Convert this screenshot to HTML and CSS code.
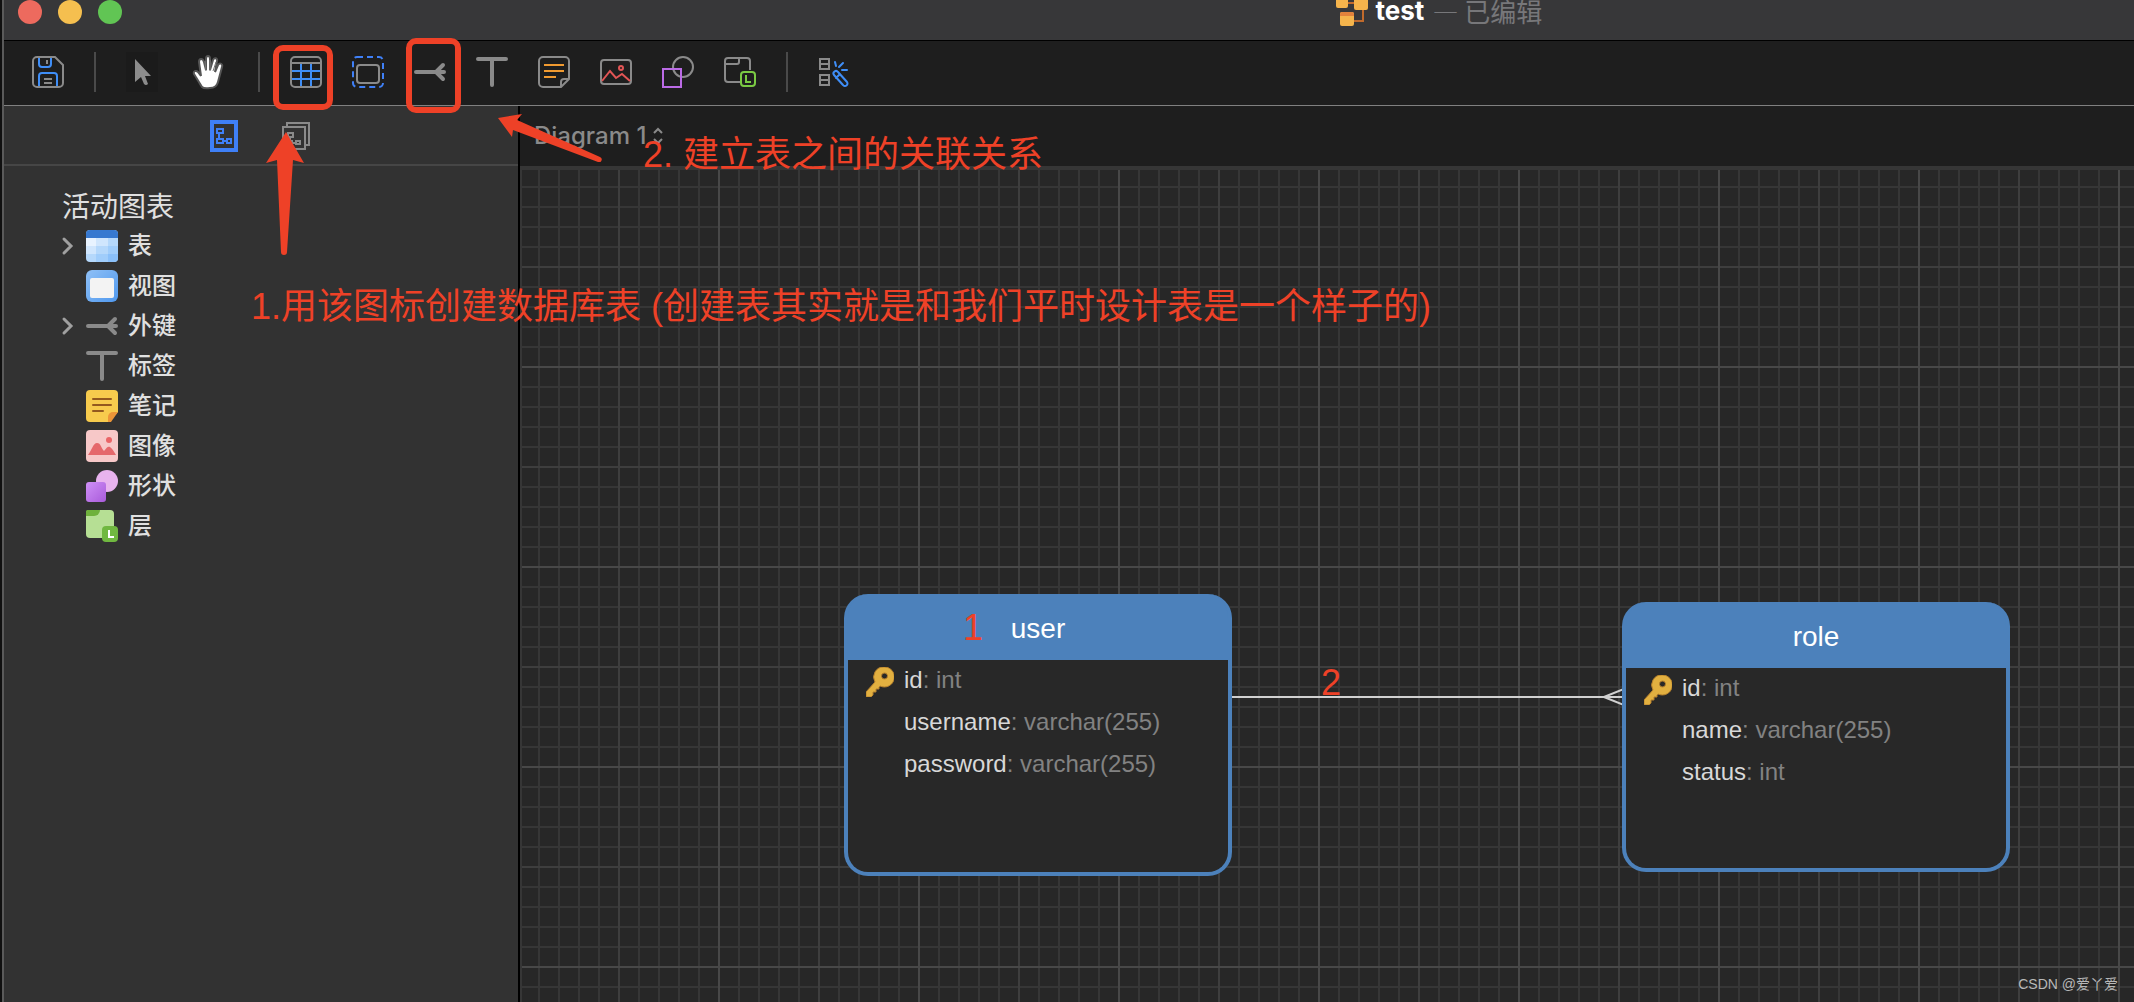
FILE: index.html
```html
<!DOCTYPE html>
<html lang="zh-CN">
<head>
<meta charset="utf-8">
<title>test — 已编辑</title>
<link rel="stylesheet" href="styles.css">
</head>
<body>
<div class="window">
  <header class="titlebar">
    <div class="lights">
      <button class="light light-close" aria-label="关闭"></button>
      <button class="light light-min" aria-label="最小化"></button>
      <button class="light light-max" aria-label="缩放"></button>
    </div>
    <svg class="doc-icon" width="32" height="32" viewBox="0 0 32 32">
      <g fill="none" stroke="#c06a2c" stroke-width="2"><path d="M10 9H20M27 12V27H16"/></g>
      <g fill="#f5b44c"><rect x="0" y="2" width="12" height="12" rx="2"/><rect x="18" y="2" width="14" height="14" rx="2"/><rect x="4" y="18" width="14" height="14" rx="2"/></g>
      <path d="M4 22v-2a2 2 0 0 1 2-2h10a2 2 0 0 1 2 2v2z" fill="#e2823c"/>
    </svg>
    <h1 class="doc-name">test</h1>
    <span class="doc-state">— 已编辑</span>
  </header>

  <nav class="toolbar" aria-label="工具">
    <button class="tool" aria-label="保存">
      <svg width="32" height="32" viewBox="0 0 32 32" fill="none" stroke-width="2"><g stroke="#8a8a8a"><path d="M5 1H23L31 9V27a4 4 0 0 1-4 4H5a4 4 0 0 1-4-4V5a4 4 0 0 1 4-4z"/><path d="M15 4v4M12 23h8M12 27h8"/></g><path d="M7 2V8a3 3 0 0 0 3 3h6a3 3 0 0 0 3-3V2M7 30V20a3 3 0 0 1 3-3H22a3 3 0 0 1 3 3V30" stroke="#3f8ef7"/></svg>
    </button>
    <i class="divider divider-wide"></i>
    <button class="tool tool-pressed" aria-label="选择">
      <svg width="32" height="40" viewBox="0 0 32 40"><path d="M9 7V30l6-5 3 7q2 2 4 0l-3-8h6z" fill="#8c8c8c"/></svg>
    </button>
    <button class="tool tool-hand" aria-label="移动">
      <svg width="32" height="36" viewBox="0 0 32 36"><path d="M10 33C8 30 4 23 2 20 1 17 4 16 6 18L9 22 7 8C7 4 11 4 12 8L14 16V5C14 1 18 1 18 5V16L21 6C22 3 26 4 25 7L23 18 26 11C28 8 31 10 30 13L26 28C25 32 22 34 18 34Q12 35 10 33z" fill="#fff" stroke="#555" stroke-width="2"/><path d="M13 7 14 17M18 6V17M24 8 21 17" stroke="#777" stroke-width="1"/></svg>
    </button>
    <i class="divider divider-mid"></i>
    <button class="tool" aria-label="表">
      <svg width="32" height="32" viewBox="0 0 32 32" fill="none" stroke-width="2"><path d="M11 8V30M21 8V30M2 15H30M2 23H30" stroke="#3f8ef7"/><path d="M2 7H30" stroke="#8a8a8a"/><rect x="1" y="1" width="30" height="30" rx="4" stroke="#8a8a8a"/></svg>
    </button>
    <button class="tool" aria-label="视图">
      <svg width="32" height="32" viewBox="0 0 32 32" fill="none" stroke-width="2"><rect x="1" y="1" width="30" height="30" rx="4" stroke="#3f80f7" stroke-dasharray="6 4"/><rect x="5" y="9" width="22" height="18" rx="3" stroke="#8a8a8a"/></svg>
    </button>
    <button class="tool" aria-label="外键">
      <svg width="32" height="32" viewBox="0 0 32 32" fill="none" stroke="#8a8a8a" stroke-width="4" stroke-linecap="round"><path d="M2 16H30M22 16 29 9M22 16 29 23"/></svg>
    </button>
    <button class="tool" aria-label="标签">
      <svg width="32" height="32" viewBox="0 0 32 32" fill="none" stroke="#8a8a8a" stroke-width="4" stroke-linecap="round"><path d="M2 3H30M16 3V29"/></svg>
    </button>
    <button class="tool" aria-label="笔记">
      <svg width="32" height="32" viewBox="0 0 32 32" fill="none" stroke-width="2"><path d="M31 23V5a4 4 0 0 0-4-4H5a4 4 0 0 0-4 4V27a4 4 0 0 0 4 4H23zM23 31V26a3 3 0 0 1 3-3h5" stroke="#8a8a8a"/><path d="M6 9H26M6 15H26M6 21H18" stroke="#f09a30"/></svg>
    </button>
    <button class="tool" aria-label="图像">
      <svg width="32" height="32" viewBox="0 0 32 32" fill="none" stroke-width="2"><rect x="1" y="4" width="30" height="24" rx="3" stroke="#8a8a8a"/><path d="M2 25 10 15 16 22 22 18 30 25" stroke="#e25555"/><circle cx="21" cy="12" r="2" stroke="#e25555"/></svg>
    </button>
    <button class="tool" aria-label="形状">
      <svg width="32" height="32" viewBox="0 0 32 32" fill="none" stroke-width="2"><circle cx="21" cy="11" r="10" stroke="#8a8a8a"/><rect x="1" y="13" width="18" height="18" stroke="#bb6be6"/></svg>
    </button>
    <button class="tool" aria-label="层">
      <svg width="32" height="32" viewBox="0 0 32 32" fill="none" stroke-width="2"><path d="M26 14V5a3 3 0 0 0-3-3H4a3 3 0 0 0-3 3V23a3 3 0 0 0 3 3H16M15 3V6a2 2 0 0 1-2 2H1" stroke="#8a8a8a"/><rect x="17" y="16" width="14" height="14" rx="3" stroke="#7ac943"/><path d="M22 19V26H27" stroke="#7ac943"/></svg>
    </button>
    <i class="divider divider-end"></i>
    <button class="tool" aria-label="自动布局">
      <svg width="32" height="32" viewBox="0 0 32 32" fill="none" stroke-width="2"><path d="M2 3H11V13H2zM2 8H11M2 19H11V29H2zM2 24H11" stroke="#8a8a8a"/><g stroke="#3f8ef7" stroke-linecap="round"><path d="M17 6 18 10M25 7 21 11M24 14H29"/><path d="M16 19a2 2 0 0 1 4-3L29 26a2 2 0 0 1-4 3zM18 22 22 18"/></g></svg>
    </button>
  </nav>

  <div class="body">
    <aside class="sidebar">
      <div class="sidebar-tabs">
        <button class="tab" aria-label="活动图表">
          <svg width="28" height="32" viewBox="0 0 28 32" fill="none"><rect x="2" y="2" width="24" height="28" stroke="#3f80f7" stroke-width="4"/><path d="M7 9H13V13H7zM9 13V19M7 19H13V23H7zM17 19H21V23H17zM13 21H17" stroke="#3f80f7" stroke-width="2"/></svg>
        </button>
        <button class="tab" aria-label="所有图表">
          <svg width="28" height="28" viewBox="0 0 28 28" fill="none" stroke="#8a8a8a" stroke-width="2"><path d="M5 4V1H27V23H24M1 5H23V27H1zM6 11H11V15H6zM8 15V19M14 19H18V22H14zM6 19H10V22H6zM10 21H14"/></svg>
        </button>
      </div>
      <h2 class="tree-title">活动图表</h2>
      <ul class="tree">
        <li class="tree-row"><svg class="chev" width="10" height="16" viewBox="0 0 10 16"><path d="M1 1 8 8 1 15"/></svg>
          <svg class="tree-icon" width="32" height="32" viewBox="0 0 32 32"><clipPath id="tc"><rect width="32" height="32" rx="4"/></clipPath><g clip-path="url(#tc)"><rect width="32" height="32" fill="#b5d8fb"/><rect width="32" height="8" fill="#3779d0"/><rect y="8" width="10" height="8" fill="#e8f3ff"/><rect x="10" y="8" width="12" height="8" fill="#d0e6fd"/><rect y="16" width="10" height="8" fill="#d0e6fd"/><rect x="22" y="16" width="10" height="8" fill="#a0cdfb"/><rect x="10" y="24" width="12" height="8" fill="#a0cdfb"/><rect x="22" y="24" width="10" height="8" fill="#8ac0fa"/></g></svg><span>表</span></li>
        <li class="tree-row"><i class="chev"></i>
          <svg class="tree-icon" width="32" height="32" viewBox="0 0 32 32"><defs><linearGradient id="vg" x2="1" y2="1"><stop stop-color="#8fc0f6"/><stop offset="1" stop-color="#4f98ee"/></linearGradient></defs><rect width="32" height="32" rx="6" fill="url(#vg)"/><rect x="4" y="8" width="24" height="20" rx="2" fill="#f3f3f3"/></svg><span>视图</span></li>
        <li class="tree-row"><svg class="chev" width="10" height="16" viewBox="0 0 10 16"><path d="M1 1 8 8 1 15"/></svg>
          <svg class="tree-icon" width="32" height="32" viewBox="0 0 32 32" fill="none" stroke="#8a8a8a" stroke-width="4" stroke-linecap="round"><path d="M2 16H30M22 16 29 9M22 16 29 23"/></svg><span>外键</span></li>
        <li class="tree-row"><i class="chev"></i>
          <svg class="tree-icon" width="32" height="32" viewBox="0 0 32 32" fill="none" stroke="#8a8a8a" stroke-width="4" stroke-linecap="round"><path d="M2 3H30M16 3V29"/></svg><span>标签</span></li>
        <li class="tree-row"><i class="chev"></i>
          <svg class="tree-icon" width="32" height="32" viewBox="0 0 32 32"><path d="M4 0H28a4 4 0 0 1 4 4V22L22 32H4a4 4 0 0 1-4-4V4a4 4 0 0 1 4-4z" fill="#f7cb4d"/><path d="M32 22 25 32H22V27a5 5 0 0 1 5-5z" fill="#ec9538"/><path d="M7 9H25M7 15H25M7 21H17" stroke="#93591f" stroke-width="2" stroke-linecap="round"/></svg><span>笔记</span></li>
        <li class="tree-row"><i class="chev"></i>
          <svg class="tree-icon" width="32" height="32" viewBox="0 0 32 32"><rect width="32" height="32" rx="4" fill="#f7c8c8"/><path d="M2 25C6 20 7 13 11 13 15 13 15 18 18 21 21 17 22 16 24 17 27 19 28 22 30 25z" fill="#e5686b"/><circle cx="23" cy="10" r="3" fill="#ea6467"/></svg><span>图像</span></li>
        <li class="tree-row"><i class="chev"></i>
          <svg class="tree-icon" width="32" height="32" viewBox="0 0 32 32"><defs><linearGradient id="sg" x2="1" y2="1"><stop stop-color="#cf90f7"/><stop offset="1" stop-color="#a95bda"/></linearGradient></defs><circle cx="21" cy="11" r="11" fill="#e8b3ee"/><rect y="12" width="20" height="20" rx="3" fill="url(#sg)"/></svg><span>形状</span></li>
        <li class="tree-row"><i class="chev"></i>
          <svg class="tree-icon" width="32" height="32" viewBox="0 0 32 32"><rect width="28" height="28" rx="4" fill="#b6df94"/><path d="M1 0H14a6 6 0 0 1-6 6H0V1z" fill="#6fb13c"/><rect x="16" y="16" width="16" height="16" rx="4" fill="#70b840"/><path d="M23 20V27H28" fill="none" stroke="#fff" stroke-width="2"/></svg><span>层</span></li>
      </ul>
    </aside>

    <main class="workspace">
      <div class="crumbs">
        <button class="diagram-pick">Diagram 1
          <svg width="12" height="18" viewBox="0 0 12 18" fill="none" stroke="#8a8a8a" stroke-width="2"><path d="M2 6 6 2 10 6M2 12 6 16 10 12"/></svg>
        </button>
      </div>
      <div class="canvas">
        <svg class="relation" width="392" height="20" viewBox="0 0 392 20" fill="none" stroke="#d0d0d0" stroke-width="2"><path d="M0 10H392M372 10 392 2M372 10 392 18"/></svg>
        <section class="entity entity-user">
          <h3 class="entity-name">user</h3>
          <ul class="fields">
            <li class="field"><svg class="key" width="28" height="30" viewBox="0 0 28 30"><use href="#key"/></svg><b>id</b>: int</li>
            <li class="field"><b>username</b>: varchar(255)</li>
            <li class="field"><b>password</b>: varchar(255)</li>
          </ul>
        </section>
        <section class="entity entity-role">
          <h3 class="entity-name">role</h3>
          <ul class="fields">
            <li class="field"><svg class="key" width="28" height="30" viewBox="0 0 28 30"><g id="key"><path d="M18 0a10 10 0 1 1-4 19l-1 1v2h-3v3H7v3l-2 2H0V25L9 15A10 10 0 0 1 18 0zM18 6a3 3 0 1 0 1 6 3 3 0 0 0-1-6z" fill="#e2b040" stroke="#b5802c" stroke-width="1"/></g></svg><b>id</b>: int</li>
            <li class="field"><b>name</b>: varchar(255)</li>
            <li class="field"><b>status</b>: int</li>
          </ul>
        </section>
      </div>
    </main>
  </div>
</div>

<div class="notes">
  <i class="mark mark-table"></i>
  <i class="mark mark-key"></i>
  <svg class="arrow arrow-up" width="40" height="124" viewBox="0 0 40 124"><path d="M20 0 38 31 27 28 21 120a3 3 0 0 1-6 0L11 28 0 31z"/></svg>
  <svg class="arrow arrow-left" width="104" height="48" viewBox="0 0 104 48"><path d="M0 4 24 0 19 6 102 43a2 2 0 0 1-2 5L15 16 14 23z"/></svg>
  <p class="note note-one">1.用该图标创建数据库表 (创建表其实就是和我们平时设计表是一个样子的)</p>
  <p class="note note-two">2. 建立表之间的关联关系</p>
  <p class="note note-n1">1</p>
  <p class="note note-n2">2</p>
  <p class="watermark">CSDN @爱丫爱</p>
</div>
</body>
</html>
```

FILE: styles.css
```css
* { box-sizing: border-box; }
body {
  margin: 0;
  background: #101010;
  color: #e0e0e0;
  font-family: "Liberation Sans", "Noto Sans CJK SC", sans-serif;
  position: relative;
  overflow: hidden;
}
h1, h2, h3, p, ul { margin: 0; padding: 0; font-weight: 400; }
ul { list-style: none; }
svg { display: block; flex: none; }
button { padding: 0; border: 0; background: none; color: inherit; font: inherit; }

.window {
  min-height: 100vh;
  margin-left: 2px;
  border-left: 2px solid #5a5a5a;
  display: flex;
  flex-direction: column;
}

/* title bar */
.titlebar {
  height: 41px;
  background: #373739;
  border-bottom: 1px solid #000;
  display: grid;
  grid-template-columns: 9fr auto auto auto 4fr;
  align-items: start;
}
.lights { display: flex; gap: 16px; padding-left: 14px; }
.light { width: 24px; height: 24px; border-radius: 50%; }
.light-close { background: #ed6a5e; }
.light-min { background: #f5bf4f; }
.light-max { background: #61c554; }
.doc-icon { margin-top: -6px; }
.doc-name { margin-left: 8px; font: 700 26px/22px Inter, sans-serif; color: #fff; }
.doc-state { margin-left: 8px; font: 26px/22px "Noto Sans CJK SC", sans-serif; color: #77777a; }

/* toolbar */
.toolbar {
  height: 65px;
  background: #1e1e1e;
  border-bottom: 1px solid #808080;
  display: flex;
  align-items: center;
  gap: 30px;
  padding: 0 0 2px 28px;
}
.tool { width: 32px; display: flex; justify-content: center; flex: none; }
.tool-pressed { background: #1b1b1b; }
.tool-hand { margin-left: 4px; }
.divider { width: 2px; height: 40px; background: #4a4a4a; flex: none; }
.divider-mid { margin-left: 4px; }

.body { flex: 1; display: flex; }

/* sidebar */
.sidebar { width: 516px; flex: none; background: #323232; border-right: 2px solid #000; }
.sidebar-tabs {
  height: 60px;
  padding: 2px 2px 0 0;
  border-bottom: 2px solid #464646;
  display: flex;
  align-items: center;
  justify-content: center;
  gap: 44px;
}
.tree-title { margin-top: 24px; padding-left: 58px; font-size: 28px; line-height: 36px; }
.tree-row { height: 40px; padding-left: 59px; display: flex; align-items: center; font-size: 24px; font-weight: 500; }
.tree-row span { padding-bottom: 5px; }
.chev { width: 10px; margin-right: 13px; fill: none; stroke: #a0a0a0; stroke-width: 3; stroke-linecap: round; overflow: visible; }
.tree-icon { margin-right: 10px; }

/* canvas */
.workspace { flex: 1; display: flex; flex-direction: column; min-width: 0; }
.crumbs { height: 60px; background: #1e1e1e; padding-left: 14px; display: flex; align-items: center; }
.diagram-pick { display: flex; align-items: center; gap: 6px; color: #8a8a8a; font: 500 24px/28px Inter, sans-serif; }
.canvas {
  flex: 1;
  position: relative;
  border-top: 4px solid #363636;
  border-left: 2px solid #363636;
  background-color: #272727;
  background-image:
    linear-gradient(90deg, #484848 2px, transparent 2px),
    linear-gradient(#484848 2px, transparent 2px),
    linear-gradient(90deg, #3e3e3e 2px, transparent 2px),
    linear-gradient(#3e3e3e 2px, transparent 2px),
    linear-gradient(90deg, #363636 2px, transparent 2px),
    linear-gradient(#363636 2px, transparent 2px);
  background-size: 200px 200px, 200px 200px, 100px 100px, 100px 100px, 20px 20px, 20px 20px;
  background-position: 196px 0, 0 196px, 96px 0, 0 96px, 16px 0, 0 16px;
}
.entity {
  position: absolute;
  width: 388px;
  background: linear-gradient(#4c81bb 66px, #282828 66px);
  border: 4px solid #4c81bb;
  border-top: 0;
  border-radius: 24px;
}
.entity-user { left: 322px; top: 424px; height: 282px; }
.entity-role { left: 1100px; top: 432px; height: 270px; }
.entity-name { height: 66px; color: #fff; font-size: 28px; line-height: 70px; text-align: center; }
.field { height: 42px; padding-left: 56px; font-size: 24px; line-height: 40px; color: #828282; position: relative; }
.field b { font-weight: 400; color: #d8d8d8; }
.key { position: absolute; left: 18px; top: 7px; }
.relation { position: absolute; left: 710px; top: 517px; }

/* annotations drawn over the window */
.mark { position: absolute; border: 6px solid #ee4127; border-radius: 10px; }
.mark-table { left: 273px; top: 45px; width: 60px; height: 65px; }
.mark-key { left: 406px; top: 38px; width: 55px; height: 75px; }
.arrow { position: absolute; fill: #ee4127; }
.arrow-up { left: 266px; top: 132px; }
.arrow-left { left: 498px; top: 114px; }
.note { position: absolute; color: #ee4127; font: 400 36px/40px "Liberation Sans", "Noto Sans CJK SC", sans-serif; white-space: nowrap; }
.note-one { left: 251px; top: 287px; }
.note-two { left: 643px; top: 135px; }
.note-n1 { left: 963px; top: 608px; }
.note-n2 { left: 1321px; top: 663px; }
.watermark {
  position: absolute;
  right: 16px;
  top: 974px;
  color: #b8b8b8;
  font: 14px/20px "Liberation Sans", "Noto Sans CJK SC", sans-serif;
}
```
